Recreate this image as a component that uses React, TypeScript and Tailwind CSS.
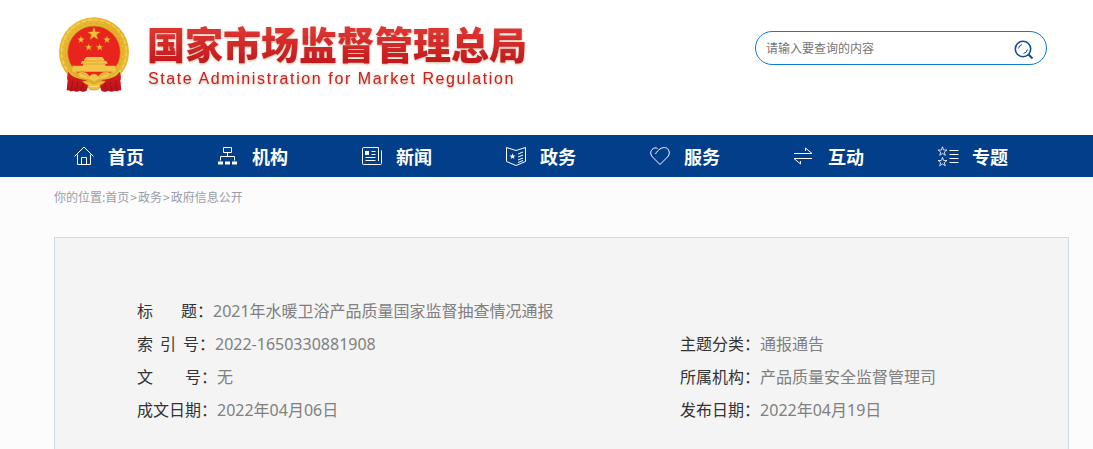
import React, { useState } from "react";

interface NavItem {
  label: string;
  icon: React.ReactNode;
}

interface Field {
  label: string[];
  value: string;
  width?: string;
}

const starPoints = (cx: number, cy: number, r: number) =>
  Array.from({ length: 10 }, (_, i) => {
    const radius = i % 2 === 0 ? r : r * 0.4;
    const angle = (Math.PI / 5) * i - Math.PI / 2;
    return `${(cx + radius * Math.cos(angle)).toFixed(1)},${(cy + radius * Math.sin(angle)).toFixed(1)}`;
  }).join(" ");

const NAV: NavItem[] = [
  {
    label: "首页",
    icon: (
      <>
        <path d="M.5 10.5 10 1l9.500 9.500" />
        <path d="M3.500 8.500v10h13v-10" />
        <path d="M7.500 18.500v-7h5v7" />
      </>
    ),
  },
  {
    label: "机构",
    icon: (
      <>
        <path d="M5.500 1.500h8v5h-8zM9.500 6.500v4M2.500 14.500v-4h14v4" />
        <path d="M0 15.500h5v3H0zM7 15.500h5v3H7zM14 15.500h5v3h-5z" fill="currentColor" stroke="none" />
      </>
    ),
  },
  {
    label: "新闻",
    icon: (
      <>
        <path d="M16.500 1.500h-15a1 1 0 0 0-1 1v15a1 1 0 0 0 1 1h17a1 1 0 0 0 1-1V4.500M16.500 1.500v13.500" />
        <path d="M9.500 5.500h4M9.500 8.500h4M3.500 11.500h10M3.500 14.500h10" />
        <path d="M3 5h4v4H3z" fill="currentColor" stroke="none" />
      </>
    ),
  },
  {
    label: "政务",
    icon: (
      <>
        <path d="M.5 1.500 10 4.500l9.500-3v14L10 19.500l-9.500-4z" />
        <path d="m12 8 5-2M12 11l5-2M12 14l5-2M12 16.500l5-2" />
        <polygon points={starPoints(6.5, 10.5, 3.2)} fill="currentColor" stroke="none" />
      </>
    ),
  },
  {
    label: "服务",
    icon: (
      <path d="M5.500 8C6.500 6 8 4.200 10 3c3-2 6-1.800 7.800 0 2 2.300 2 5.500-.3 8L10 18.500 2.500 11C.2 8.500.3 5.500 2 3.500c1.500-1.800 4-2 5.500-1" />
    ),
  },
  {
    label: "互动",
    icon: <path d="M0 7.500h18l-6.500-5.500V5M18 12.500H0l6.500 5.500V15" />,
  },
  {
    label: "专题",
    icon: (
      <>
        <polygon points={starPoints(4.5, 5.5, 4.7)} strokeWidth="0.8" />
        <polygon points={starPoints(4.5, 16, 4.7)} strokeWidth="0.8" />
        <path d="M11.500 4.500h9M11.500 8.500h9M11.500 12.500h9M11.500 16.500h9" />
      </>
    ),
  },
];

const CRUMBS = ["首页", "政务", "政府信息公开"];

const LEFT_FIELDS: Field[] = [
  { label: ["标", "题："], value: "2021年水暖卫浴产品质量国家监督抽查情况通报", width: "w-[76px]" },
  { label: ["索", "引", "号："], value: "2022-1650330881908", width: "w-[78px]" },
  { label: ["文", "号："], value: "无", width: "w-20" },
  { label: ["成文日期："], value: "2022年04月06日", width: "w-20" },
];

const RIGHT_FIELDS: Field[] = [
  { label: ["主题分类："], value: "通报通告" },
  { label: ["所属机构："], value: "产品质量安全监督管理司" },
  { label: ["发布日期："], value: "2022年04月19日" },
];

const Emblem = () => (
  <svg viewBox="26 20 210 228" className="h-[76px] w-[70px] shrink-0" aria-hidden="true">
    <defs>
      <linearGradient id="gold" x1="0" y1="0" x2="1" y2="1">
        <stop offset="0" stopColor="#edc13a" />
        <stop offset=".5" stopColor="#e3b02a" />
        <stop offset="1" stopColor="#ecbc34" />
      </linearGradient>
      <linearGradient id="drape" x1="0" y1="0" x2="0" y2="1">
        <stop offset="0" stopColor="#dd1f1f" />
        <stop offset="1" stopColor="#b81119" />
      </linearGradient>
    </defs>
    <ellipse cx="131" cy="125" rx="105" ry="104" fill="url(#gold)" />
    <circle cx="131" cy="125" r="97" fill="none" stroke="#f3d254" strokeWidth="4" strokeDasharray="14 5" />
    <circle cx="131" cy="125" r="86" fill="none" stroke="#dba628" strokeWidth="3" strokeDasharray="9 8" />
    <circle cx="131" cy="126" r="79" fill="#e8241c" stroke="#cf9420" strokeWidth="2" />
    {/* stars */}
    <g fill="#f0c03a" stroke="#c48424" strokeWidth="1">
      <polygon points={starPoints(131, 71, 20)} />
      <polygon points={starPoints(92, 88, 11)} />
      <polygon points={starPoints(170, 88, 11)} />
      <polygon points={starPoints(115, 111, 11)} />
      <polygon points={starPoints(148, 111, 11)} />
    </g>
    {/* gate tower */}
    <path d="M108 140h48l6 8v4h6l4 8h-7v7H98v-7h-7l4-8h6v-4zM66 166h130v18H66z" fill="#f4c548" />
    <path d="M101 152h61M97 161h69" stroke="#d9952c" strokeWidth="2" />
    {/* draped ribbons */}
    <path d="M54 184c10 16 30 22 50 24l14 10-10 24c-10 4-14 1-20-1-8 5-14 3-19 0-8 4-12 1-13-2-3 3-6 1-7 0 2-12 1-20 3-28-3-6-2-18 2-27z" fill="url(#drape)" />
    <path d="M208 184c-10 16-30 22-50 24l-14 10 10 24c10 4 14 1 20-1 8 5 14 3 19 0 8 4 12 1 13-2 3 3 6 1 7 0-2-12-1-20-3-28 3-6 2-18-2-27z" fill="url(#drape)" />
    <path d="M66 210c1 12-1 20-5 28M82 214c1 10-1 18-6 25M98 216c0 10-3 18-8 24M196 210c-1 12 1 20 5 28M180 214c-1 10 1 18 6 25M164 216c0 10 3 18 8 24" fill="none" stroke="#8f0e17" strokeWidth="2" />
    {/* wheat stems and gear */}
    <path d="M82 188c14-6 28-2 36 10 4-5 8-7 13-7s9 2 13 7c8-12 22-16 36-10-2 12-14 19-32 18l-17 8-17-8c-18 1-30-6-32-18z" fill="#f3c746" stroke="#cb8f26" strokeWidth="1" />
    <path d="M92 190c10 0 18 4 23 11M170 190c-10 0-18 4-23 11" fill="none" stroke="#d1902b" strokeWidth="2" />
    <path d="M97 213c12-3 23 1 34 8 11-7 22-11 34-8-4 6-10 9-16 11 2 9-5 15-18 15s-20-6-18-15c-6-2-12-5-16-11z" fill="#f0c03c" stroke="#cb8f26" strokeWidth="2" />
    <path d="M117 226c8 4 20 4 28 0" fill="none" stroke="#fae385" strokeWidth="3" />
  </svg>
);

const FieldRow = ({ label, value, width = "w-20" }: Field) => (
  <div className="flex h-[33px] items-center">
    <dt className={`flex shrink-0 justify-between whitespace-pre text-[#333] ${width}`}>
      {label.map((part) => (
        <span key={part}>{part}</span>
      ))}
    </dt>
    <dd className="whitespace-nowrap text-[#808080]">{value}</dd>
  </div>
);

export default function App() {
  const [query, setQuery] = useState("");

  return (
    <div className="flex min-h-screen flex-col bg-[#fcfcfc] font-['Noto_Sans','Noto_Sans_CJK_SC',sans-serif]">
      <header className="flex h-[135px] items-start justify-between bg-white pr-[46px] pl-[59px]">
        <a href="#" className="flex items-start gap-[18px] pt-[17px]">
          <Emblem />
          <div className="pt-1 whitespace-nowrap drop-shadow-[0_1px_1px_#cbb89a]">
            <h1 className="bg-linear-to-b from-[#e53a37] to-[#c2161b] bg-clip-text font-['Noto_Sans_CJK_SC',sans-serif] text-[38px] leading-[44px] font-black text-transparent">
              国家市场监督管理总局
            </h1>
            <p className="pt-1 pl-px font-['Liberation_Sans',sans-serif] text-base leading-5 tracking-widest text-[#cf2020]">
              State Administration for Market Regulation
            </p>
          </div>
        </a>

        <form
          onSubmit={(e) => e.preventDefault()}
          className="mt-[31px] flex h-[34px] w-[292px] items-center rounded-full border border-[#0f7ad1] pr-3 pl-[10px]"
        >
          <input
            type="text"
            aria-label="搜索"
            placeholder="请输入要查询的内容"
            value={query}
            onChange={(e) => setQuery(e.target.value)}
            className="min-w-0 flex-1 bg-transparent font-['Noto_Sans_CJK_SC',sans-serif] text-xs text-[#333] outline-none placeholder:text-[#757575]"
          />
          <button type="submit" aria-label="查询" className="pt-1">
            <svg viewBox="0 0 20 20" className="size-5" fill="none" stroke="#124b98">
              <circle cx="9" cy="9" r="7.700" strokeWidth="1.600" />
              <path d="m14.500 14.500 4 4" strokeWidth="2" />
              <path d="M4.500 8.500A5 5 0 0 1 8 4.500M13.500 9.500a5 5 0 0 1-4 4" strokeWidth="1" />
            </svg>
          </button>
        </form>
      </header>

      <nav className="bg-[#023e8a] pl-[54px]">
        <ul className="flex">
          {NAV.map((item) => (
            <li key={item.label} className="w-36">
              <a href="#" className="flex h-[42px] items-center gap-[14px] pl-5 text-white">
                <svg viewBox="0 0 20 20" className="size-5 overflow-visible" fill="none" stroke="currentColor">
                  {item.icon}
                </svg>
                <span className="font-['Noto_Sans_CJK_SC',sans-serif] text-lg font-bold">{item.label}</span>
              </a>
            </li>
          ))}
        </ul>
      </nav>

      <div className="flex h-[60px] items-start pt-[11px] pl-[54px] font-['Noto_Sans_CJK_SC',sans-serif] text-xs leading-[18px] text-[#9a9da8]">
        <span>你的位置:</span>
        {CRUMBS.map((crumb, idx) => (
          <React.Fragment key={crumb}>
            {idx > 0 && <span className="px-px">&gt;</span>}
            <a href="#">{crumb}</a>
          </React.Fragment>
        ))}
      </div>

      <main className="mr-6 ml-[54px] grid flex-1 grid-cols-[7fr_5fr] border border-b-0 border-[#ccd9e8] bg-[#f4f4f4] pt-14 pl-[82px] text-base">
        <dl>
          {LEFT_FIELDS.map((field) => (
            <FieldRow key={field.value} {...field} />
          ))}
        </dl>
        <dl className="pt-[33px]">
          {RIGHT_FIELDS.map((field) => (
            <FieldRow key={field.value} {...field} />
          ))}
        </dl>
      </main>
    </div>
  );
}
